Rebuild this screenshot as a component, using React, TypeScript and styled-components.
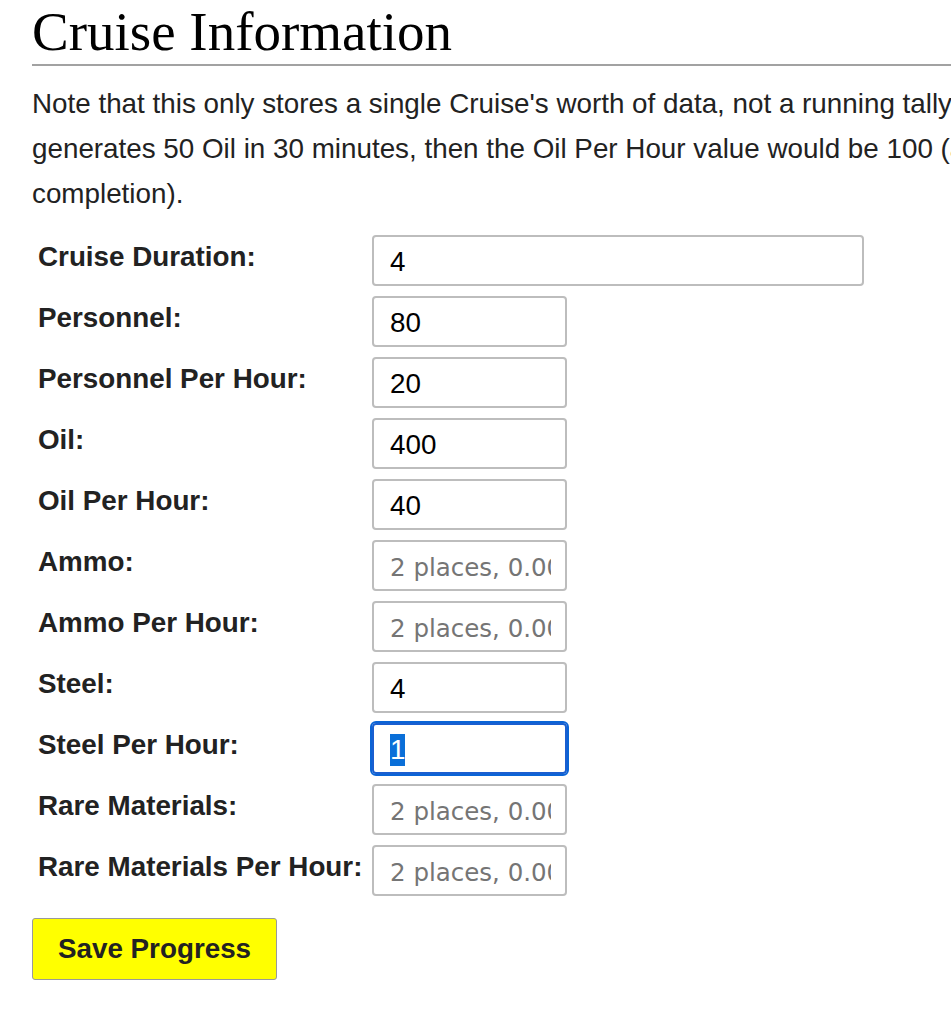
import React, { useEffect, useRef } from "react";
import styled, { createGlobalStyle } from "styled-components";

const Global = createGlobalStyle`
  html, body {
    margin: 0;
    padding: 0;
    background: #ffffff;
    overflow: hidden;
  }
  body {
    font-family: "Liberation Sans", Arial, sans-serif;
    color: #222222;
  }
`;

const Page = styled.div`
  padding: 0 0 0 32px;
  width: 1500px;
`;

const Title = styled.h1`
  margin: 0;
  padding: 4px 0 4px 0;
  font-family: "Liberation Serif", "Times New Roman", serif;
  font-weight: normal;
  font-size: 55px;
  line-height: 56px;
  color: #000000;
  border-bottom: 2px solid #a2a2a2;
`;

const Note = styled.p`
  margin: 15px 0 0 0;
  font-size: 27.8px;
  line-height: 45px;
  white-space: nowrap;
  color: #222222;
`;

const Form = styled.div`
  display: grid;
  grid-template-columns: 334px auto;
  row-gap: 10px;
  margin-top: 19px;
  padding-left: 6px;
  justify-items: start;
`;

const Label = styled.label`
  font-weight: bold;
  font-size: 27.8px;
  line-height: 32px;
  padding-top: 6px;
  color: #222222;
`;

const Field = styled.input<{ $wide?: boolean; $active?: boolean }>`
  box-sizing: border-box;
  width: ${(p) => (p.$wide ? "492px" : "195px")};
  height: 51px;
  padding: 2px 14px 0 16px;
  border: 2px solid ${(p) => (p.$active ? "#1a5fd0" : "#bdbdbd")};
  border-radius: 4px;
  outline: ${(p) => (p.$active ? "2px solid #0a64d6" : "none")};
  outline-offset: 0;
  font-family: "Liberation Sans", Arial, sans-serif;
  font-size: 27.8px;
  color: #000000;
  background: #ffffff;
  &::placeholder {
    font-family: "DejaVu Sans", Tahoma, sans-serif;
    font-size: 24.5px;
    color: #757575;
  }
  &::selection {
    background: #0a6fd8;
    color: #ffffff;
  }
`;

const SaveButton = styled.button`
  margin-top: 22px;
  box-sizing: border-box;
  width: 245px;
  height: 62px;
  background: #ffff00;
  border: 1px solid #9a9a9a;
  border-radius: 3px;
  font-family: "Liberation Sans", Arial, sans-serif;
  font-weight: bold;
  font-size: 27.8px;
  color: #222222;
  cursor: pointer;
`;

type Row = { label: string; value?: string; wide?: boolean; active?: boolean };

const rows: Row[] = [
  { label: "Cruise Duration:", value: "4", wide: true },
  { label: "Personnel:", value: "80" },
  { label: "Personnel Per Hour:", value: "20" },
  { label: "Oil:", value: "400" },
  { label: "Oil Per Hour:", value: "40" },
  { label: "Ammo:" },
  { label: "Ammo Per Hour:" },
  { label: "Steel:", value: "4" },
  { label: "Steel Per Hour:", value: "1", active: true },
  { label: "Rare Materials:" },
  { label: "Rare Materials Per Hour:" },
];

export default function App() {
  const activeRef = useRef<HTMLInputElement>(null);

  useEffect(() => {
    const el = activeRef.current;
    if (el) {
      el.focus();
      el.select();
    }
  }, []);

  return (
    <Page>
      <Global />
      <Title>Cruise Information</Title>
      <Note>
        Note that this only stores a single Cruise's worth of data, not a running tally of all of your Cruises. For example, if a Cruise
        <br />
        generates 50 Oil in 30 minutes, then the Oil Per Hour value would be 100 (assuming it runs through to
        <br />
        completion).
      </Note>
      <Form>
        {rows.map((r, i) => (
          <React.Fragment key={r.label}>
            <Label htmlFor={`f${i}`}>{r.label}</Label>
            <Field
              id={`f${i}`}
              ref={r.active ? activeRef : undefined}
              $wide={r.wide}
              $active={r.active}
              defaultValue={r.value}
              placeholder={r.value === undefined ? "2 places, 0.00" : undefined}
            />
          </React.Fragment>
        ))}
      </Form>
      <SaveButton>Save Progress</SaveButton>
    </Page>
  );
}
